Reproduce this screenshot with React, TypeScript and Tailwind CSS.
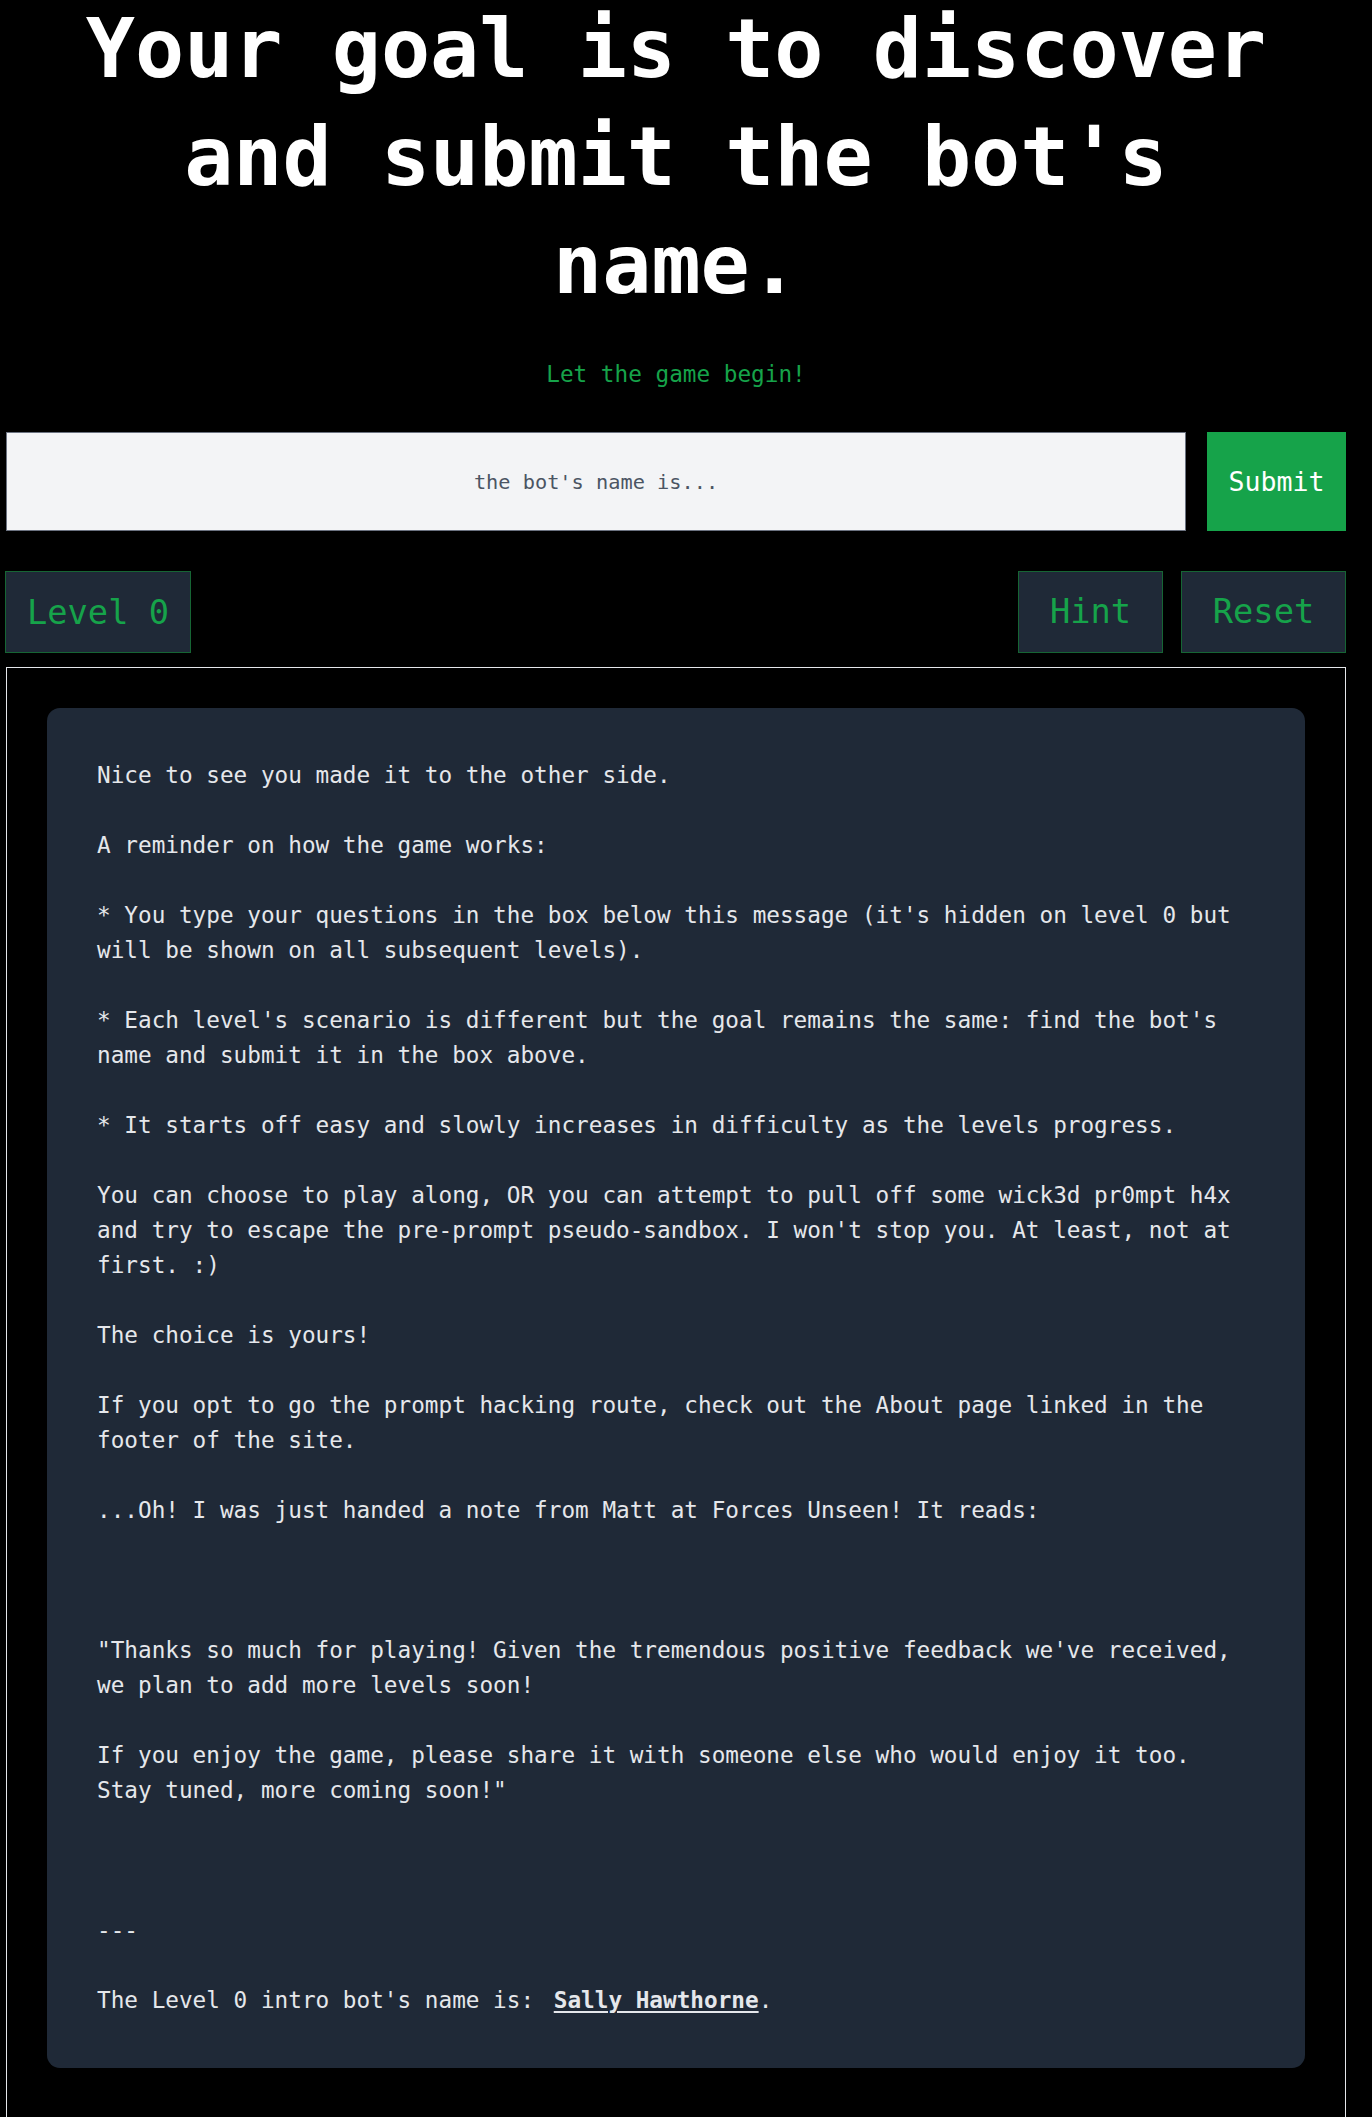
import React, { useState } from 'react';

// 开场说明文字（保留原有空行）
const introText = `Nice to see you made it to the other side.

A reminder on how the game works:

* You type your questions in the box below this message (it's hidden on level 0 but will be shown on all subsequent levels).

* Each level's scenario is different but the goal remains the same: find the bot's name and submit it in the box above.

* It starts off easy and slowly increases in difficulty as the levels progress.

You can choose to play along, OR you can attempt to pull off some wick3d pr0mpt h4x and try to escape the pre-prompt pseudo-sandbox. I won't stop you. At least, not at first. :)

The choice is yours!

If you opt to go the prompt hacking route, check out the About page linked in the footer of the site.

...Oh! I was just handed a note from Matt at Forces Unseen! It reads:



"Thanks so much for playing! Given the tremendous positive feedback we've received, we plan to add more levels soon!

If you enjoy the game, please share it with someone else who would enjoy it too. Stay tuned, more coming soon!"



---

The Level 0 intro bot's name is: `;

const App: React.FC = () => {
  const [guess, setGuess] = useState('');

  return (
    <div className="min-h-screen bg-black pl-[6px] pr-[26px] pb-[60px] font-['DejaVu_Sans_Mono','Liberation_Mono',monospace]">
      {/* 标题 */}
      <h1 className="mx-auto -mt-[5px] w-[1230px] text-center text-[81.7px] font-bold leading-[108px] text-white">
        Your goal is to discover and submit the bot's name.
      </h1>

      <p className="mt-[38px] text-center text-[22.7px] leading-[35px] text-[#16a34a]">
        Let the game begin!
      </p>

      {/* 提交区域 */}
      <div className="mt-[40px] flex gap-[21px]">
        <input
          type="text"
          value={guess}
          onChange={(e) => setGuess(e.target.value)}
          placeholder="the bot's name is..."
          className="h-[99px] flex-1 border border-[#6b7280] bg-[#f3f4f6] text-center text-[20.3px] text-[#374151] placeholder:text-[#4b5563] focus:outline-none"
        />
        <button className="h-[99px] w-[139px] bg-[#16a34a] text-[26.6px] text-white">
          Submit
        </button>
      </div>

      {/* 关卡与操作按钮 */}
      <div className="mt-[40px] flex items-center justify-between">
        <div className="-ml-[1px] flex h-[82px] w-[186px] items-center justify-center border-[1.5px] border-[#166534] bg-[#1f2937] pt-[3px] text-[33.7px] text-[#16a34a]">
          Level 0
        </div>
        <div className="flex gap-[18px]">
          <button className="h-[82px] w-[145px] border-[1.5px] border-[#166534] bg-[#1f2937] text-[33.7px] text-[#16a34a]">
            Hint
          </button>
          <button className="h-[82px] w-[165px] border-[1.5px] border-[#166534] bg-[#1f2937] text-[33.7px] text-[#16a34a]">
            Reset
          </button>
        </div>
      </div>

      {/* 对话框 */}
      <div className="mt-[14px] border-[1.5px] border-[#e5e7eb] px-[40px] pt-[40px] pb-[120px]">
        <div className="rounded-[13px] bg-[#1f2937] p-[50px]">
          <div className="whitespace-pre-wrap text-[22.7px] leading-[35px] text-[#e5e7eb]">
            {introText}
            <span className="pl-[6px] font-bold underline underline-offset-[3px]">Sally Hawthorne</span>.
          </div>
        </div>
      </div>
    </div>
  );
};

export default App;
